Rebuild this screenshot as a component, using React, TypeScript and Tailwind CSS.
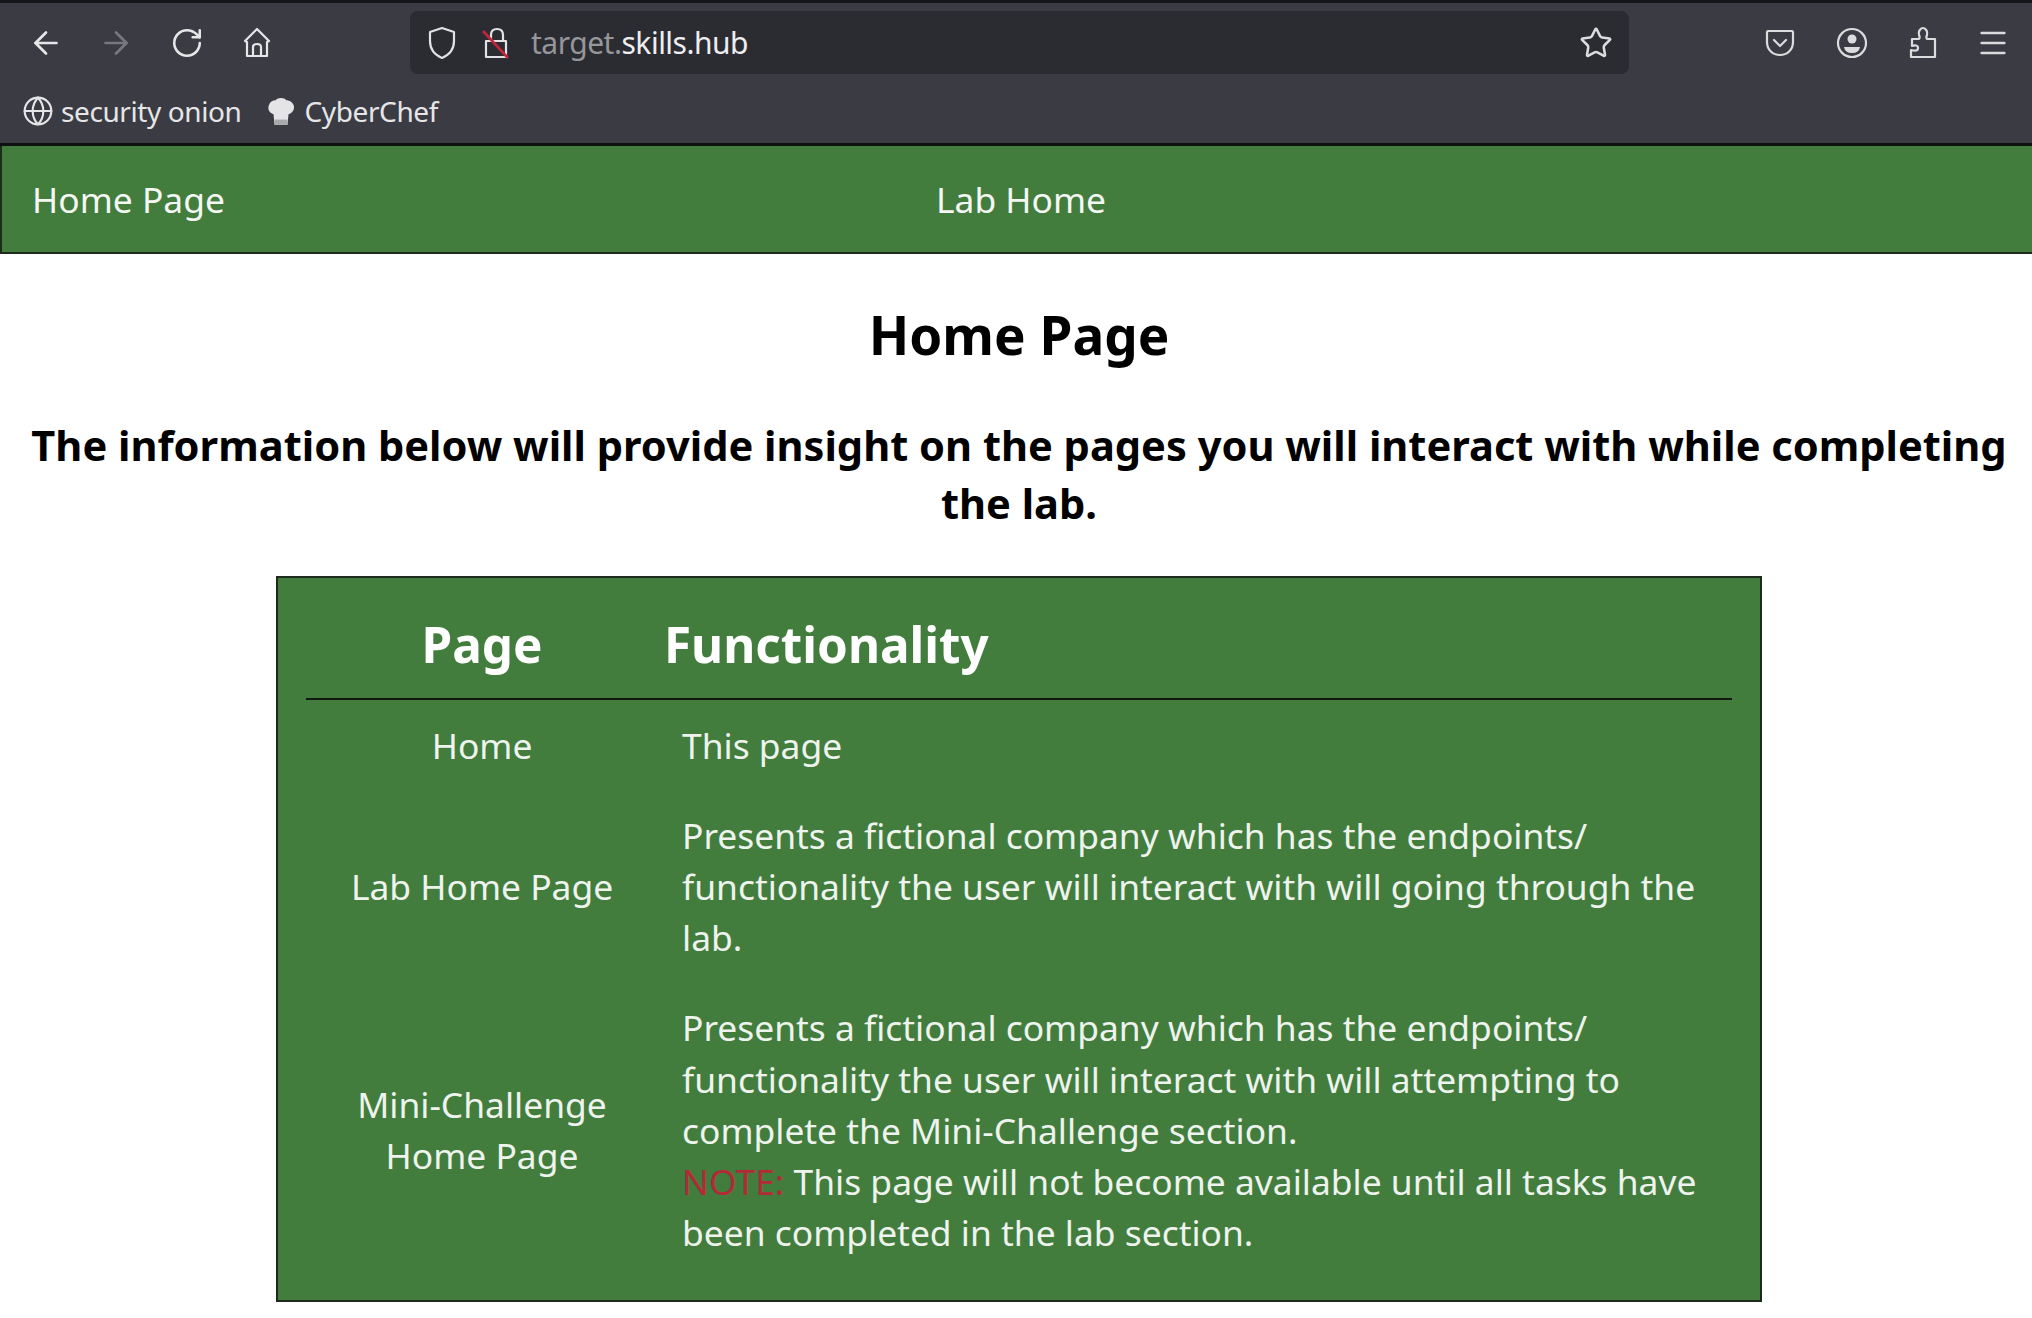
import React from 'react';
import { ArrowLeft, ArrowRight, RotateCw, Globe, Menu, Star } from 'lucide-react';

const noto = '[font-family:"Noto_Sans",sans-serif]';

const HomeIcon = () => (
  <svg width="30" height="32" viewBox="0 0 30 32" fill="none" stroke="#e6e6e8" strokeWidth="2.2" strokeLinejoin="round">
    <path d="M15 2 L27 14 L25 15 V29 H5 V15 L3 14 Z" />
    <path d="M11 29 V20 Q11 17 15 17 Q19 17 19 20 V29" />
  </svg>
);

const ShieldIcon = () => (
  <svg width="30" height="34" viewBox="0 0 30 34" fill="none" stroke="#e2e2e4" strokeWidth="2.2" strokeLinejoin="round">
    <path d="M15 2 L27 6 V15 C27 23 22 29 15 32 C8 29 3 23 3 15 V6 Z" />
  </svg>
);

const LockOffIcon = () => (
  <svg width="30" height="34" viewBox="0 0 30 34" fill="none" strokeWidth="2.2">
    <path d="M10 15 V9 Q10 3 16 3 Q22 3 22 9 V15" stroke="#e2e2e4" />
    <path d="M5 15 H25 V31 H5 Z" stroke="#e2e2e4" strokeLinejoin="round" />
    <path d="M2 5 L27 32" stroke="#c3263a" strokeWidth="2.6" />
  </svg>
);

const PocketIcon = () => (
  <svg width="30" height="28" viewBox="0 0 30 28" fill="none" stroke="#dcdcde" strokeWidth="2.2" strokeLinejoin="round" strokeLinecap="round">
    <path d="M3 2 H27 Q28 2 28 4 V13 C28 21 22 26 15 26 C8 26 2 21 2 13 V4 Q2 2 3 2 Z" />
    <path d="M9 11 L15 17 L21 11" />
  </svg>
);

const AccountIcon = () => (
  <svg width="32" height="32" viewBox="0 0 32 32" fill="none">
    <circle cx="16" cy="16" r="14" stroke="#dcdcde" strokeWidth="2.2" />
    <circle cx="16" cy="12" r="4.5" fill="#dcdcde" />
    <path d="M8 20 H24 Q23 26 16 26 Q9 26 8 20 Z" fill="#dcdcde" />
  </svg>
);

const PuzzleIcon = () => (
  <svg width="28" height="34" viewBox="0 0 28 34" fill="none" stroke="#dcdcde" strokeWidth="2.2" strokeLinejoin="round">
    <path d="M2 31 H26 V13 H19 C17 13 17 11 18 9 C19 6 17 2 14 2 C11 2 9 6 10 9 C11 11 11 13 9 13 H3 V20 C6 19 9 19 9 22 C9 25 6 25 2 24 Z" />
  </svg>
);

const ChefIcon = () => (
  <svg width="30" height="30" viewBox="0 0 26 28">
    <path d="M7 27 L6 17 C2 16 0 12 2 8 C3 5 6 4 8 4 C10 1 16 1 18 4 C21 4 24 6 25 9 C26 13 23 16 20 17 L19 27 Z" fill="#e4e4e6" />
    <path d="M7 22 H19 V27 H7 Z" fill="#a9a9ac" />
  </svg>
);

const App = () => {
  return (
    <div className={`min-h-[1318px] bg-white ${noto}`}>
      {/* Browser chrome */}
      <div className="h-[146px] bg-[#3b3c43] border-t-[3px] border-t-[#16171b] border-b-[3px] border-b-[#0f1012] flex flex-col">
        <div className="h-[79px] flex items-center text-[#e6e6e8]">
          <div className="w-[410px] shrink-0 flex items-center">
            <ArrowLeft size={36} strokeWidth={1.8} className="ml-[28px]" />
            <ArrowRight size={36} strokeWidth={1.8} className="ml-[34px] text-[#77787d]" />
            <RotateCw size={34} strokeWidth={1.8} className="ml-[36px]" />
            <span className="ml-[38px] flex"><HomeIcon /></span>
          </div>
          <div className="w-[1219px] h-[63px] shrink-0 rounded-lg bg-[#2b2c31] flex items-center pl-[17px] pr-[16px]">
            <ShieldIcon />
            <span className="ml-[24px] flex"><LockOffIcon /></span>
            <span className={`ml-[20px] text-[30px] leading-none ${noto} text-[#96979b] tracking-[-0.5px]`}>
              target.<span className="text-[#eeeef0]">skills.hub</span>
            </span>
            <Star size={34} strokeWidth={1.8} className="ml-auto text-[#dcdcde]" />
          </div>
          <div className="flex-1 flex items-center">
            <span className="ml-[136px] flex"><PocketIcon /></span>
            <span className="ml-[41px] flex"><AccountIcon /></span>
            <span className="ml-[41px] flex"><PuzzleIcon /></span>
            <Menu size={34} strokeWidth={1.8} className="ml-[39px] text-[#dcdcde]" />
          </div>
        </div>
        <div className="flex items-center pl-[22px] h-[54px] pt-[4px] text-[#e6e6e8] text-[28px] tracking-[-0.4px]">
          <Globe size={32} strokeWidth={1.6} />
          <span className="ml-[7px]">security onion</span>
          <span className="ml-[24px] flex"><ChefIcon /></span>
          <span className="ml-[9px]">CyberChef</span>
        </div>
      </div>

      {/* Site nav */}
      <nav className="h-[108px] pt-[2px] bg-[#427d3e] border-b-2 border-l-2 border-[#1e2a1c] flex items-center pl-[30px] text-[35.4px] text-[#f4f7f3]">
        <a className="w-[904px] shrink-0">Home Page</a>
        <a>Lab Home</a>
      </nav>

      <div className="pl-[6px]">
        <h1 className="mt-[49px] text-center text-[53px] leading-[64px] font-bold text-black">Home Page</h1>
        <h2 className="mt-[49px] px-[20px] text-center text-[41.6px] leading-[58px] font-bold text-black">
          The information below will provide insight on the pages you will interact with while completing the lab.
        </h2>

        {/* Pages table */}
        <div className="mt-[44px] mx-auto w-[1486px] h-[726px] bg-[#427d3e] border-2 border-[#1f2a1e] px-[28px]">
          <table className="w-full border-collapse text-[35.4px] leading-[51.2px] text-[#eef3ed]">
            <thead>
              <tr className="h-[121px] border-b-2 border-[#10180f]">
                <th className="w-[352px] pt-[12px] text-center text-[49.4px] font-bold text-white">Page</th>
                <th className="pl-[6px] pt-[12px] text-left text-[49.4px] font-bold text-white">Functionality</th>
              </tr>
            </thead>
            <tbody>
              <tr>
                <td className="py-[19.5px] text-center align-middle">Home</td>
                <td className="py-[19.5px] pl-[24px]">This page</td>
              </tr>
              <tr>
                <td className="py-[19.5px] text-center align-middle">Lab Home Page</td>
                <td className="py-[19.5px] pl-[24px]">
                  Presents a fictional company which has the endpoints/ functionality the user will interact with will going through the lab.
                </td>
              </tr>
              <tr>
                <td className="py-[19.5px] px-[40px] text-center align-middle">Mini-Challenge Home Page</td>
                <td className="py-[19.5px] pl-[24px]">
                  Presents a fictional company which has the endpoints/ functionality the user will interact with will attempting to complete the Mini-Challenge section.
                  <br />
                  <span className="text-[#b22a37]">NOTE:</span> This page will not become available until all tasks have been completed in the lab section.
                </td>
              </tr>
            </tbody>
          </table>
        </div>
      </div>
    </div>
  );
};

export default App;
